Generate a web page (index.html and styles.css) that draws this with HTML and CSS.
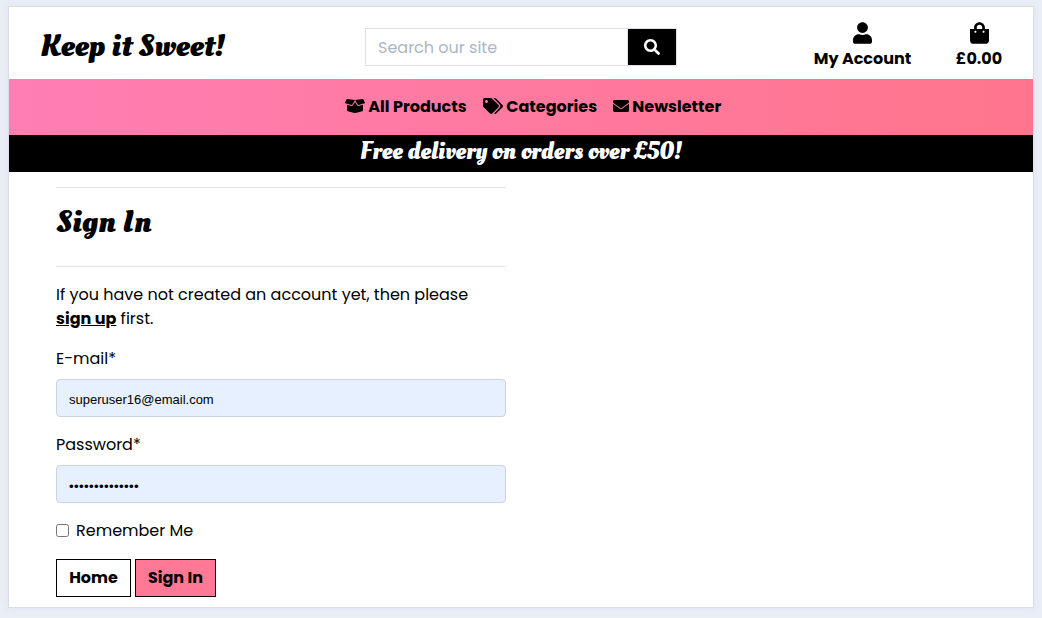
FILE: index.html
```html
<!DOCTYPE html>
<html lang="en">
<head>
<meta charset="utf-8">
<title>Keep it Sweet! - Sign In</title>
<link rel="stylesheet" href="styles.css">
</head>
<body>
<div class="frame">
  <header class="top">
    <a class="logo script">Keep it Sweet!</a>
    <form class="search">
      <input class="search-input" type="text" placeholder="Search our site">
      <button class="search-btn" type="button" aria-label="Search"><svg width="16" height="16" viewBox="0 0 512 512"><path d="M505 442.7L405.3 343c-4.5-4.5-10.6-7-17-7H372c27.6-35.3 44-79.7 44-128C416 93.1 322.9 0 208 0S0 93.1 0 208s93.1 208 208 208c48.3 0 92.7-16.4 128-44v16.3c0 6.4 2.5 12.5 7 17l99.7 99.7c9.4 9.4 24.6 9.4 33.9 0l28.3-28.3c9.4-9.4 9.4-24.6.1-34zM208 336c-70.7 0-128-57.2-128-128 0-70.7 57.2-128 128-128 70.7 0 128 57.2 128 128 0 70.7-57.2 128-128 128z"/></svg></button>
    </form>
    <div class="links">
      <a class="link account"><svg width="19" height="22" viewBox="0 0 448 512"><path d="M224 256c70.7 0 128-57.3 128-128S294.7 0 224 0 96 57.3 96 128s57.3 128 128 128zm89.6 32h-16.7c-22.2 10.2-46.9 16-72.9 16s-50.6-5.8-72.9-16h-16.7C60.2 288 0 348.2 0 422.4V464c0 26.5 21.5 48 48 48h352c26.5 0 48-21.5 48-48v-41.6c0-74.2-60.2-134.4-134.4-134.4z"/></svg><span>My Account</span></a>
      <a class="link bag"><svg width="19" height="22" viewBox="0 0 448 512"><path d="M352 160v-32C352 57.42 294.579 0 224 0 153.42 0 96 57.42 96 128v32H0v272c0 44.183 35.817 80 80 80h288c44.183 0 80-35.817 80-80V160h-96zm-192-32c0-35.29 28.71-64 64-64s64 28.71 64 64v32H160v-32zm160 120c-13.255 0-24-10.745-24-24s10.745-24 24-24 24 10.745 24 24-10.745 24-24 24zm-192 0c-13.255 0-24-10.745-24-24s10.745-24 24-24 24 10.745 24 24-10.745 24-24 24z"/></svg><span>£0.00</span></a>
    </div>
  </header>
  <nav class="nav">
    <a class="nav-item products"><svg width="20" height="16" viewBox="0 0 640 512"><path d="M425.7 256c-16.9 0-32.8-9-41.4-23.4L320 126l-64.2 106.6c-8.7 14.5-24.6 23.5-41.5 23.5-4.5 0-9-.6-13.3-1.9L64 215v178c0 14.7 10 27.5 24.2 31l216.2 54.1c10.2 2.5 20.9 2.5 31 0L551.8 424c14.2-3.6 24.2-16.4 24.2-31V215l-137 39.1c-4.3 1.3-8.8 1.9-13.3 1.9zm212.6-112.2L586.8 41c-3.1-6.2-9.8-9.8-16.7-8.9L320 64l91.7 152.1c3.8 6.3 11.4 9.3 18.5 7.3l197.9-56.5c9.9-2.9 14.7-13.9 10.2-23.1zM53.2 41L1.7 143.8c-4.6 9.2.3 20.2 10.1 23l197.9 56.5c7.1 2 14.7-1 18.5-7.3L320 64 69.8 32.1c-6.9-.8-13.5 2.7-16.6 8.9z"/></svg><span>All Products</span></a>
    <a class="nav-item categories"><svg width="20" height="16" viewBox="0 0 640 512"><path d="M497.941 225.941L286.059 14.059A48 48 0 0 0 252.118 0H48C21.49 0 0 21.49 0 48v204.118a48 48 0 0 0 14.059 33.941l211.882 211.882c18.744 18.745 49.136 18.746 67.882 0l204.118-204.118c18.745-18.745 18.745-49.137 0-67.882zM112 160c-26.51 0-48-21.49-48-48s21.49-48 48-48 48 21.49 48 48-21.49 48-48 48zm513.941 133.823L421.823 497.941c-18.745 18.745-49.137 18.745-67.882 0l-.36-.36L527.64 323.522c16.999-16.999 26.36-39.6 26.36-63.64s-9.362-46.641-26.36-63.64L331.397 0h48.721a48 48 0 0 1 33.941 14.059l211.882 211.882c18.745 18.745 18.745 49.137 0 67.882z"/></svg><span>Categories</span></a>
    <a class="nav-item newsletter"><svg width="16" height="16" viewBox="0 0 512 512"><path d="M502.3 190.8c3.9-3.1 9.7-.2 9.7 4.7V400c0 26.5-21.5 48-48 48H48c-26.5 0-48-21.5-48-48V195.6c0-5 5.7-7.8 9.7-4.7 22.4 17.4 52.1 39.5 154.1 113.6 21.1 15.4 56.7 47.8 92.2 47.6 35.7.3 72-32.8 92.3-47.6 102-74.1 131.6-96.3 154-113.7zM256 320c23.2.4 56.6-29.2 73.4-41.4 132.7-96.3 142.8-104.7 173.4-128.7 5.8-4.5 9.2-11.5 9.2-18.9v-19c0-26.5-21.5-48-48-48H48c-26.5 0-48 21.5-48 48v19c0 7.4 3.4 14.3 9.2 18.9 30.6 23.9 40.7 32.4 173.4 128.7 16.8 12.2 50.2 41.8 73.4 41.4z"/></svg><span>Newsletter</span></a>
  </nav>
  <div class="banner script">Free delivery on orders over £50!</div>
  <main class="content">
    <h1 class="title script">Sign In</h1>
    <p class="intro">If you have not created an account yet, then please <a class="signup">sign up</a> first.</p>
    <label class="label" for="email">E-mail*</label>
    <input class="field" id="email" type="text" value="superuser16@email.com">
    <label class="label" for="password">Password*</label>
    <input class="field password" id="password" type="password" value="sweetsandtreat">
    <div class="remember"><input class="check" type="checkbox" id="remember"><label for="remember">Remember Me</label></div>
    <div class="actions"><a class="btn home">Home</a><button class="btn submit" type="button">Sign In</button></div>
  </main>
</div>
</body>
</html>
```
FILE: styles.css
```css
* { box-sizing: border-box; }
body {
  margin: 0;
  height: 618px;
  overflow: hidden;
  padding: 6px 8px 10px;
  background: #e9eef7;
  color: #000;
  font: 16px/24px Poppins, Inter, sans-serif;
}
svg { display: block; fill: currentColor; flex: none; }
.script {
  font-family: "Oleo Script", "Liberation Serif", serif;
  font-weight: 700;
  white-space: nowrap;
}
.frame {
  height: 602px;
  background: #fff;
  border: 1px solid #dadee3;
  box-shadow: 0 0 8px rgba(100, 115, 135, .07);
}
.top {
  height: 72px;
  display: grid;
  grid-template-columns: 325px 312px 1fr;
  padding-left: 31px;
}
.logo {
  padding-top: 19px;
  font-size: 32px;
  line-height: 40px;
}
.search { display: flex; height: 38px; margin-top: 21px; border: 1px solid #dee2e6; }
.search-input {
  width: 262px;
  padding: 1px 12px 0;
  border: 0;
  border-right: 1px solid #dee2e6;
  font: inherit;
}
.search-input::placeholder { color: #aab7c4; opacity: 1; }
.search-btn {
  flex: 1;
  display: flex;
  align-items: center;
  justify-content: center;
  border: 0;
  background: #000;
  color: #fff;
}
.links { display: flex; justify-content: flex-end; gap: 44.5px; padding: 15px 31px 0 0; }
.link {
  display: flex;
  flex-direction: column;
  align-items: center;
  gap: 3px;
  font-weight: 700;
  white-space: nowrap;
}
.account { width: 98px; }
.bag { width: 46px; }
.nav {
  height: 56px;
  display: flex;
  align-items: center;
  gap: 16px;
  padding-left: 336px;
  background: linear-gradient(90deg, #ff7eb3, #ff758c);
  font-weight: 700;
  white-space: nowrap;
}
.nav-item { display: flex; align-items: center; gap: 3.3px; }
.products { width: 122px; }
.categories { width: 114px; }
.nav-item svg { position: relative; top: -1px; }
.banner {
  height: 37px;
  background: #000;
  color: #fff;
  text-align: center;
  font-size: 24px;
  line-height: 33px;
}
.content { width: 450px; margin: 15px 0 0 47px; }
.title {
  height: 80px;
  margin: 0 0 16px;
  padding-top: 14px;
  border-top: 1px solid #e3e3e3;
  border-bottom: 1px solid #e3e3e3;
  font-size: 32px;
  line-height: 40px;
}
.intro { margin: 0 0 16px; }
.signup { font-weight: 700; text-decoration: underline; }
.label { display: block; margin-bottom: 8px; }
.field {
  display: block;
  width: 450px;
  height: 38px;
  margin-bottom: 16px;
  padding: 3px 12px 0;
  border: 1px solid #ced4da;
  border-radius: 4px;
  background: #e6f0ff;
  color: #000;
  font: 13px "Liberation Sans", Arial, sans-serif;
}
.password { padding-top: 4px; font-size: 13.333px; letter-spacing: .33px; }
.remember { display: flex; align-items: center; gap: 7px; height: 24px; margin-bottom: 16px; }
.check { width: 13px; height: 13px; margin: -1px 0 0; }
.actions { display: flex; gap: 4px; }
.btn {
  height: 38px;
  padding: 0;
  border: 1px solid #000;
  background: #fff;
  color: #000;
  font: inherit;
  font-weight: 700;
  line-height: 36px;
  text-align: center;
}
.home { width: 75px; }
.submit { width: 81px; background: #ff7896; }
```
